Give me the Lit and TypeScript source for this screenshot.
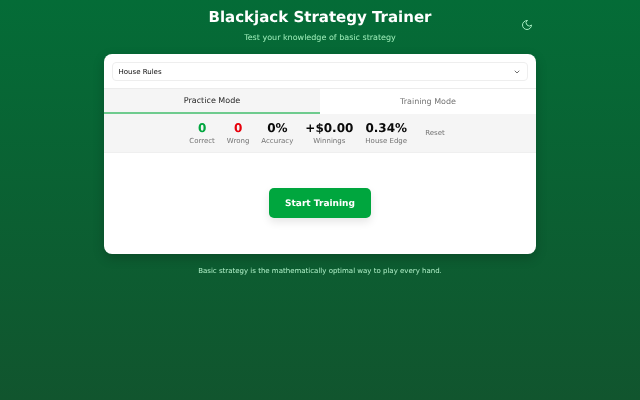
import { LitElement, html, css } from "lit";
import { customElement } from "lit/decorators.js";

@customElement("app-root")
export class AppRoot extends LitElement {
  static styles = css`
    :host {
      display: block;
      width: 640px;
      height: 400px;
      overflow: hidden;
      font-family: "DejaVu Sans", sans-serif;
      text-rendering: geometricPrecision;
      background: linear-gradient(180deg, #046c37 0%, #11552e 100%);
    }
    .page { display: flex; flex-direction: column; align-items: center; padding-top: 8px; will-change: transform; }
    .header { position: relative; width: 432px; display: flex; flex-direction: column; align-items: center; height: 46px; }
    h1 { margin: 0; font-size: 15px; line-height: 18px; font-weight: 700; color: #fff; }
    .sub { margin: 6px 0 0; font-size: 8px; line-height: 12px; color: #9eeeb9; }
    .theme { position: absolute; left: 417px; top: 11px; width: 12px; height: 12px; color: #a5ecc0; }
    .card { width: 432px; height: 200px; background: #fff; border-radius: 8px; box-shadow: 0 4px 12px rgba(0,0,0,.2); display: flex; flex-direction: column; overflow: hidden; }
    .rules { padding: 8px; flex: none; border-bottom: 1px solid #ececec; height: 35px; box-sizing: border-box; }
    .select { height: 17px; border: 1px solid #eeeeee; border-radius: 4px; display: flex; align-items: center; justify-content: space-between; padding: 0 6px 0 5.5px; font-size: 7px; color: #0a0a0a; }
    .select svg { width: 8px; height: 8px; color: #525252; }
    .tabs { display: flex; height: 25px; flex: none; }
    .tab { flex: 1; display: flex; align-items: center; justify-content: center; font-size: 8px; color: #737373; box-sizing: border-box; }
    .tab.active { background: #f5f5f5; color: #262626; border-bottom: 2px solid #6ecb8e; }
    .stats { display: flex; justify-content: center; align-items: center; gap: 12px; height: 39px; flex: none; padding-right: 6px; background: #f5f5f5; border-bottom: 1px solid #efefef; box-sizing: border-box; }
    .stat { display: flex; flex-direction: column; align-items: center; }
    .val { font-size: 12px; line-height: 16px; font-weight: 700; color: #0a0a0a; }
    .lab { font-size: 7px; line-height: 10px; color: #737373; }
    .green { color: #00a63e; }
    .red { color: #e7000b; }
    .reset { font-size: 7px; line-height: 10px; color: #737373; margin: 0 0 0 6px; }
    .body { flex: 1; display: flex; align-items: center; justify-content: center; padding-bottom: 1px; }
    button { width: 102px; height: 30px; border: 0; padding: 1px 0 0; border-radius: 5px; background: #00a63e; color: #fff; font: 700 9px "DejaVu Sans", sans-serif; text-rendering: geometricPrecision; box-shadow: 0 4px 8px rgba(0,0,0,.1); }
    .foot { margin: 12px 0 0; font-size: 7px; line-height: 11px; color: #b0f0c8; }
  `;
  render() {
    return html`<div class="page">
      <div class="header">
        <h1>Blackjack Strategy Trainer</h1>
        <p class="sub">Test your knowledge of basic strategy</p>
        <svg class="theme" viewBox="0 0 24 24" fill="none" stroke="currentColor" stroke-width="2" stroke-linecap="round" stroke-linejoin="round"><path d="M12 3a6 6 0 0 0 9 9 9 9 0 1 1-9-9Z"/></svg>
      </div>
      <div class="card">
        <div class="rules"><div class="select"><span>House Rules</span><svg viewBox="0 0 24 24" fill="none" stroke="currentColor" stroke-width="2.5" stroke-linecap="round" stroke-linejoin="round"><path d="m6 9 6 6 6-6"/></svg></div></div>
        <div class="tabs"><div class="tab active">Practice Mode</div><div class="tab">Training Mode</div></div>
        <div class="stats">
          <div class="stat"><span class="val green">0</span><span class="lab">Correct</span></div>
          <div class="stat"><span class="val red">0</span><span class="lab">Wrong</span></div>
          <div class="stat"><span class="val">0%</span><span class="lab">Accuracy</span></div>
          <div class="stat"><span class="val">+$0.00</span><span class="lab">Winnings</span></div>
          <div class="stat"><span class="val">0.34%</span><span class="lab">House Edge</span></div>
          <span class="reset">Reset</span>
        </div>
        <div class="body"><button>Start Training</button></div>
      </div>
      <p class="foot">Basic strategy is the mathematically optimal way to play every hand.</p>
    </div>`;
  }
}
